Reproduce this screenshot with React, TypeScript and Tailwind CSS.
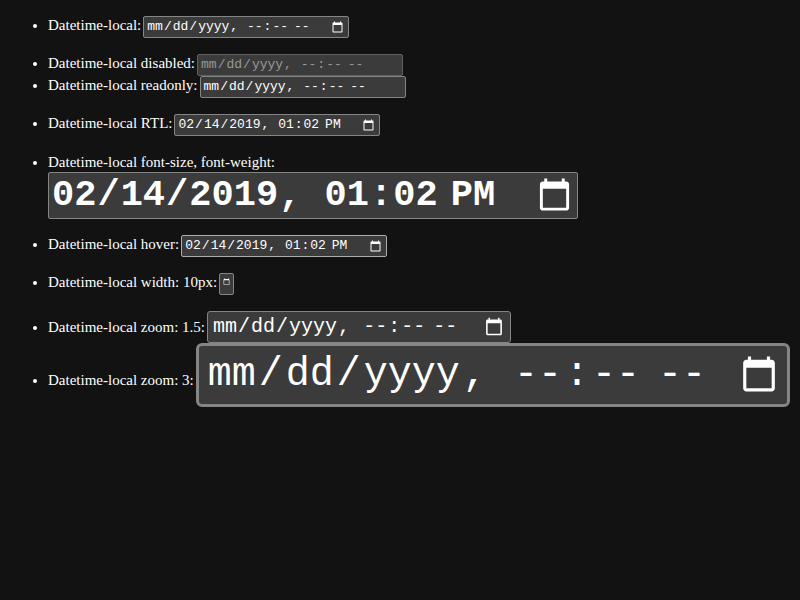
import { useId } from "react";
import type { InputHTMLAttributes } from "react";

type FieldProps = InputHTMLAttributes<HTMLInputElement> & {
  label: string;
  look?: string;
  item?: string;
};

const small = "ml-[2px] h-[22px] w-[206px] rounded-xs border px-[2px] text-[13px]";
const tall =
  "[&::-webkit-datetime-edit-month-field]:px-[3px] [&::-webkit-datetime-edit-day-field]:px-[3px] [&::-webkit-datetime-edit-year-field]:px-[3px] [&::-webkit-datetime-edit-hour-field]:px-[3px] [&::-webkit-datetime-edit-minute-field]:px-[3px] [&::-webkit-datetime-edit-ampm-field]:px-[3px]";

function Field({ label, look = `${small} border-[#858585]`, item = "", ...input }: FieldProps) {
  const id = useId();
  return (
    <li className={item}>
      <label htmlFor={id}>{label}</label>
      <input
        id={id}
        type="datetime-local"
        className={`bg-[#3b3b3b] font-['Liberation_Mono',monospace] leading-normal text-white disabled:border-[#5f5f5f] disabled:text-[#999999] ${look}`}
        {...input}
      />
    </li>
  );
}

export default function App() {
  return (
    <main className="min-h-screen bg-[#121212] px-2 pt-4 font-['Liberation_Serif',serif] text-[15px] leading-[18px] text-white scheme-dark">
      <ul className="flex list-disc flex-col gap-4 pl-10">
        <Field label="Datetime-local:" />
        <li className="list-none">
          <ul className="-ml-10 list-disc pl-10">
            <Field label="Datetime-local disabled:" disabled />
            <Field label="Datetime-local readonly:" readOnly />
          </ul>
        </li>
        <Field label="Datetime-local RTL:" defaultValue="2019-02-14T13:02" />
        <Field
          label="Datetime-local font-size, font-weight:"
          item="leading-5"
          look="block h-[47px] w-[530px] rounded-xs border border-[#858585] px-[2px] text-[37px] font-bold"
          defaultValue="2019-02-14T13:02"
        />
        <Field
          label="Datetime-local hover:"
          look={`${small} border-[#acacac]`}
          defaultValue="2019-02-14T13:02"
        />
        <Field
          label="Datetime-local width: 10px:"
          look="ml-[2px] h-[22px] w-[15px] rounded-xs border border-[#858585] px-px text-[13px]"
        />
        <li className="list-none">
          <ul className="-ml-10 list-disc pl-10">
            <Field
              label="Datetime-local zoom: 1.5:"
              look="ml-[2px] h-8 w-[304px] rounded-[3px] border border-[#858585] px-1 text-[20px]"
            />
            <Field
              label="Datetime-local zoom: 3:"
              item="whitespace-nowrap"
              look={`ml-[2px] h-16 w-[594px] rounded-md border-3 border-[#858585] px-[6px] text-[40px] ${tall}`}
            />
          </ul>
        </li>
      </ul>
    </main>
  );
}
